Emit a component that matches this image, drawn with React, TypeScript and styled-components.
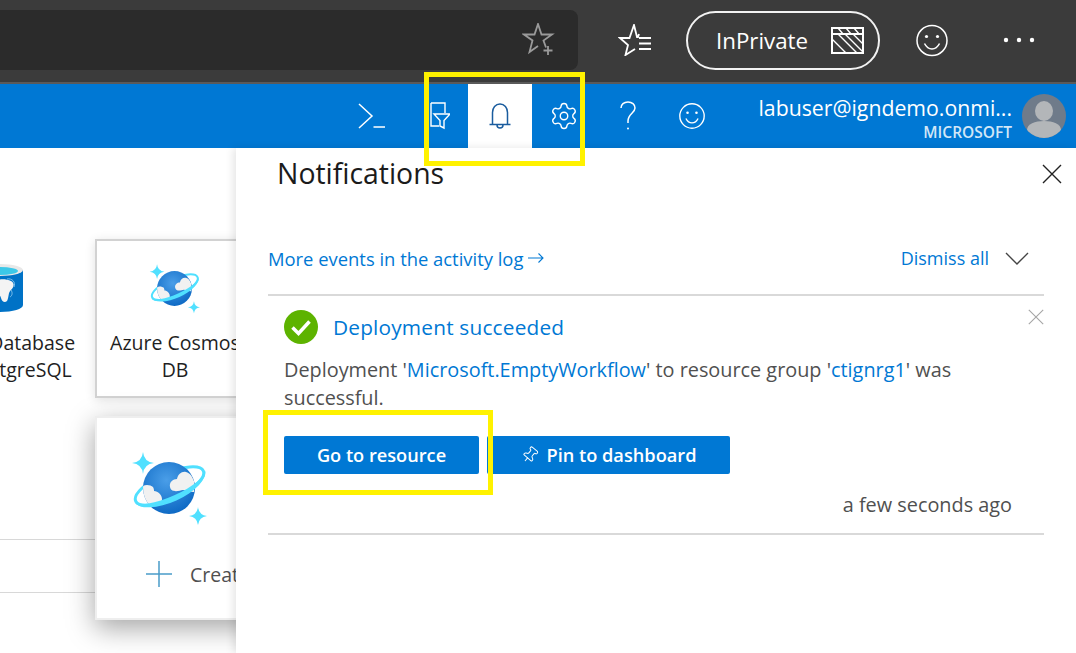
import React, { useId } from 'react';
import styled, { createGlobalStyle } from 'styled-components';
import { Settings, Pin } from 'lucide-react';

const Global = createGlobalStyle`
  html, body { margin: 0; padding: 0; background: #fff; }
  body { font-family: "Open Sans", "Noto Sans", "Liberation Sans", sans-serif; }
`;

const Page = styled.div`
  position: relative;
  width: 1076px;
  height: 653px;
  overflow: hidden;
  background: #fff;
  display: flex;
  flex-direction: column;
`;

const BrowserBar = styled.header`
  height: 80px;
  padding-bottom: 2px;
  flex: none;
  box-sizing: content-box;
  display: flex;
  align-items: center;
  background: #3b3b3b;
  border-bottom: 2px solid #5a5a5a;
`;

const AddressField = styled.div`
  width: 578px;
  height: 60px;
  flex: none;
  box-sizing: border-box;
  padding-right: 22px;
  display: flex;
  align-items: center;
  justify-content: flex-end;
  background: #2b2b2b;
  border-radius: 0 8px 8px 0;
  margin-right: 33px;
`;

const ChromeSlot = styled.div<{ $w: number; $ml?: number }>`
  width: ${p => p.$w}px;
  margin-left: ${p => p.$ml ?? 0}px;
  flex: none;
  display: flex;
  align-items: center;
  justify-content: center;
  color: #fff;
`;

const PrivatePill = styled.div`
  width: 194px;
  height: 59px;
  margin-left: 27px;
  flex: none;
  box-sizing: border-box;
  display: flex;
  align-items: center;
  padding: 0 14px 0 28px;
  justify-content: space-between;
  border: 2px solid #f2f2f2;
  border-radius: 30px;
  color: #fff;
  font-size: 22.3px;
`;

const NavBar = styled.nav`
  height: 64px;
  flex: none;
  display: flex;
  background: #0078d4;
  padding-left: 340px;
`;

const NavButton = styled.div<{ $active?: boolean }>`
  width: 64px;
  flex: none;
  display: flex;
  align-items: center;
  justify-content: center;
  color: ${p => (p.$active ? '#1a5c9e' : '#fff')};
  background: ${p => (p.$active ? '#fff' : 'transparent')};
`;

const Account = styled.div`
  flex: 1;
  min-width: 0;
  display: flex;
  flex-direction: column;
  align-items: flex-end;
  padding-top: 10px;
  color: #fff;
`;

const AccountName = styled.div`
  font-size: 21.25px;
  line-height: 27px;
  white-space: nowrap;
`;

const AccountOrg = styled.div`
  font-size: 15.5px;
  line-height: 20px;
  margin-top: 1px;
  font-weight: 600;
  color: #d3e7f7;
`;

const Avatar = styled.div`
  width: 44px;
  height: 44px;
  margin: 10px 10px 0 10px;
  flex: none;
`;

const Main = styled.main`
  flex: 1;
  display: flex;
  min-height: 0;
`;

const Canvas = styled.section`
  width: 236px;
  flex: none;
  overflow: hidden;
  box-sizing: border-box;
  padding-top: 91px;
`;

const TileRow = styled.div`
  display: flex;
  gap: 16px;
  margin-left: -79px;
`;

const Tile = styled.div<{ $framed?: boolean }>`
  width: 158px;
  height: 159px;
  flex: none;
  box-sizing: border-box;
  padding-top: 20px;
  display: flex;
  flex-direction: column;
  align-items: center;
  border: 2px solid ${p => (p.$framed ? '#d2d2d2' : 'transparent')};
  box-shadow: ${p => (p.$framed ? '0 2px 10px rgba(0,0,0,0.12)' : 'none')};
  background: #fff;
`;

const TileIcon = styled.div`
  height: 54px;
  flex: none;
  display: flex;
  align-items: center;
  justify-content: center;
`;

const TileLabel = styled.div<{ $nudge: number }>`
  margin: 14px 0 0 ${p => p.$nudge}px;
  width: 154px;
  flex: none;
  text-align: center;
  font-size: 19.5px;
  line-height: 27px;
  color: #1f1f1f;
`;

const LowerRow = styled.div`
  display: flex;
  margin-top: 18px;
`;

const ListStub = styled.div`
  width: 95px;
  flex: none;
  padding-top: 123px;
`;

const ListRow = styled.div`
  height: 52px;
  border-top: 1px solid #d8d8d8;
  &:last-child { height: 0; }
`;

const HoverCard = styled.div`
  width: 200px;
  height: 204px;
  flex: none;
  box-sizing: border-box;
  border: 2px solid #eeeeee;
  background: #fff;
  box-shadow: 0 8px 26px rgba(0, 0, 0, 0.36);
  padding: 32px 0 0 34px;
`;

const CreateRow = styled.div`
  display: flex;
  align-items: center;
  gap: 17px;
  margin: 34px 0 0 14px;
  color: #505050;
  font-size: 19.5px;
  white-space: nowrap;
`;

const Panel = styled.aside`
  flex: 1;
  position: relative;
  z-index: 1;
  background: #fff;
  box-shadow: -3px 0 8px rgba(0, 0, 0, 0.1);
  padding: 0 32px;
`;

const PanelHeader = styled.div`
  height: 52px;
  display: flex;
  align-items: center;
  justify-content: space-between;
  margin-right: -32px;
  padding: 0 14px 0 9px;
`;

const PanelTitle = styled.h2`
  margin: -3px 0 0;
  font-size: 28.4px;
  font-weight: 500;
  color: #1b1b1b;
`;

const IconAction = styled.div`
  display: flex;
  flex: none;
`;

const ActivityRow = styled.div`
  display: flex;
  align-items: center;
  justify-content: space-between;
  height: 96px;
  padding: 37px 15px 15px 0;
  box-sizing: border-box;
  border-bottom: 2px solid #d9d9d9;
`;

const Link = styled.a`
  color: #0078d4;
  text-decoration: none;
`;

const ActivityLink = styled(Link)`
  font-size: 18.4px;
  display: flex;
  align-items: center;
  gap: 5px;
`;

const DismissAll = styled.div`
  display: flex;
  align-items: center;
  gap: 16px;
  color: #0078d4;
  font-size: 18px;
`;

const Card = styled.article`
  padding: 13px 0 0 16px;
  height: 239px;
  box-sizing: border-box;
  border-bottom: 2px solid #d9d9d9;
`;

const CardHead = styled.div`
  display: flex;
  align-items: center;
  gap: 15px;
  height: 36px;
`;

const CardTitle = styled.div`
  flex: 1;
  color: #0078d4;
  font-size: 20.8px;
  letter-spacing: 0.2px;
`;

const CardDismiss = styled.div`
  display: flex;
  flex: none;
  margin-top: -20px;
`;

const CardBody = styled.p`
  margin: 11px 0 0;
  font-size: 19.85px;
  line-height: 28px;
  color: #505050;
`;

const Actions = styled.div`
  display: flex;
  gap: 8px;
  margin-top: 24px;
`;

const Button = styled.div<{ $w: number }>`
  width: ${p => p.$w}px;
  height: 38px;
  box-sizing: border-box;
  display: flex;
  align-items: center;
  justify-content: center;
  gap: 8px;
  background: #0078d4;
  border-radius: 2px;
  color: #fff;
  font-size: 18.2px;
  font-weight: 600;
`;

const Timestamp = styled.div`
  margin-top: 17px;
  padding-right: 32px;
  text-align: right;
  font-size: 19.85px;
  line-height: 28px;
  color: #505050;
`;

const Highlight = styled.div<{ $x: number; $y: number; $w: number; $h: number }>`
  position: absolute;
  z-index: 5;
  left: ${p => p.$x}px;
  top: ${p => p.$y}px;
  width: ${p => p.$w}px;
  height: ${p => p.$h}px;
  box-sizing: border-box;
  border: 5px solid #fff200;
  pointer-events: none;
`;

const sparkle = (x: number, y: number, r: number) =>
  `M${x} ${y - r}Q${x + 1} ${y - 1} ${x + r} ${y}Q${x + 1} ${y + 1} ${x} ${y + r}Q${x - 1} ${y + 1} ${x - r} ${y}Q${x - 1} ${y - 1} ${x} ${y - r}Z`;

const CosmosIcon = ({ size }: { size: number }) => {
  const id = useId();
  return (
    <svg width={size} height={size} viewBox="0 0 76 76" style={{ flex: 'none', display: 'block' }}>
      <defs>
        <radialGradient id={`${id}g`} cx="0.45" cy="0.35" r="0.7">
          <stop offset="0" stopColor="#4a9ee8" />
          <stop offset="1" stopColor="#0a66c2" />
        </radialGradient>
        <clipPath id={`${id}c`}><circle cx="38" cy="38" r="26" /></clipPath>
      </defs>
      <ellipse cx="38.500" cy="36" rx="37" ry="13" transform="rotate(-24 38.500 36)" fill="none" stroke="#50e0ff" strokeWidth="3" />
      <circle cx="38" cy="38" r="26" fill={`url(#${id}g)`} />
      <g clipPath={`url(#${id}c)`} fill="#f1f1f1">
        <path d="M39 37c-1-5 3-8 7-8 1-5 5-8 9-7 4 1 6 4 8 9v11c-5 0-8-2-11-2-4 1-12 3-13-3z" />
        <path d="M12 36c3-2 8-1 10 1 1 2 1 3 1 4 4 0 8 4 8 8 0 5-3 6-6 7l-8 1c-4-5-6-13-5-21z" />
      </g>
      <path d="M74 20A39 17 -24 0 1 3 52A39 11 -24 0 0 74 20z" fill="#50e0ff" />
      <path d={sparkle(12, 13, 11)} fill="#50e0ff" />
      <path d={sparkle(67, 66, 9)} fill="#50e0ff" />
    </svg>
  );
};

const PostgresIcon = () => (
  <svg width="46" height="48" viewBox="0 0 46 48" style={{ flex: 'none', display: 'block' }}>
    <path d="M0 6v35c0 4 10 7 23 7s23-3 23-7V6z" fill="#0072c6" />
    <ellipse cx="23" cy="6" rx="23" ry="6" fill="#e8e8e8" />
    <ellipse cx="23" cy="7" rx="18" ry="4" fill="#3cc8e8" />
    <path d="M12 20c3-5 16-6 22-3 4 2 3 6 0 9-3 2-2 8-4 11-2 2-5 1-6-3-1-5-5-3-7-5-4-2-7-5-5-9z" fill="#f4f4f4" />
    <path d="M30 15c5-1 9 3 7 8M34 26c2 3 1 6-1 7" fill="none" stroke="#7cc0ec" strokeWidth="1" />
  </svg>
);

const Smile = ({ size, w = 1.5 }: { size: number; w?: number }) => (
  <svg width={size} height={size} viewBox="0 0 32 32" fill="none" stroke="currentColor" strokeWidth={w}>
    <circle cx="16" cy="16" r="15" />
    <circle cx="10.500" cy="12" r="1.600" fill="currentColor" stroke="none" />
    <circle cx="21.500" cy="12" r="1.600" fill="currentColor" stroke="none" />
    <path d="M8.500 19c2 4 4.500 5.500 7.500 5.500s5.500-1.500 7.500-5.500" />
  </svg>
);

const CloseGlyph = ({ size, color, w }: { size: number; color: string; w: number }) => (
  <svg width={size} height={size} viewBox="0 0 20 20" stroke={color} strokeWidth={w} fill="none">
    <path d="M1 1l18 18M19 1L1 19" />
  </svg>
);

export default function App() {
  return (
    <Page>
      <Global />
      <BrowserBar>
        <AddressField>
          <svg width="34" height="34" viewBox="0 0 34 34" fill="none" stroke="#9a9a9a" strokeWidth="1.800">
            <path d="M24 24.500l-2.500-7L30 11.500H19.500L16 1l-3.500 10.500H2l8.500 6L7.500 29l8.500-6" />
            <path d="M26 23v9M21.500 27.500h9" />
          </svg>
        </AddressField>
        <ChromeSlot $w={48}>
          <svg width="34" height="32" viewBox="0 0 34 32" fill="none" stroke="#fff" strokeWidth="1.800">
            <path d="M21 14h12M21 19.500h12M21 25h12" />
            <path d="M21 10l-1 3h-1l-3-12-4.500 13H2l8 7-2.500 10L17 25" />
          </svg>
        </ChromeSlot>
        <PrivatePill>
          InPrivate
          <svg width="33" height="27" viewBox="0 0 33 27" fill="none" stroke="#fff">
            <rect x="1" y="1" width="31" height="25" strokeWidth="2" />
            <path d="M1 7h31" strokeWidth="2" />
            <path d="M7 7l19 19M14 7l18 18M1 12l14 14M22 7l10 10M7 1l5 6M15 1l5 6M23 1l5 6" strokeWidth="1.400" />
          </svg>
        </PrivatePill>
        <ChromeSlot $w={32} $ml={36}><Smile size={33} /></ChromeSlot>
        <ChromeSlot $w={50} $ml={46}>
          <svg width="32" height="6" viewBox="0 0 32 6" fill="#fff">
            <circle cx="3" cy="3" r="2.200" /><circle cx="16" cy="3" r="2.200" /><circle cx="29" cy="3" r="2.200" />
          </svg>
        </ChromeSlot>
      </BrowserBar>

      <NavBar>
        <NavButton>
          <svg width="28" height="26" viewBox="0 0 28 26" fill="none" stroke="currentColor" strokeWidth="1.500">
            <path d="M1 1l13 12L1 25M15.500 24H27" />
          </svg>
        </NavButton>
        <NavButton>
          <svg width="28" height="28" viewBox="0 0 28 28" fill="none" stroke="currentColor" strokeWidth="1.400">
            <path d="M9 1h14v10M17 24H9V1" />
            <path d="M12 12h16l-6 6.500v7.500l-4-2v-5.500z" />
          </svg>
        </NavButton>
        <NavButton $active>
          <svg width="22" height="26" viewBox="0 0 22 26" fill="none" stroke="currentColor" strokeWidth="1.500">
            <path d="M3.500 21V9.500C3.500 5 6.500 1 11 1s7.500 4 7.500 8.500V21" />
            <path d="M0.500 21.500h21M8 22c0 2 1.500 3 3 3s3-1 3-3" />
          </svg>
        </NavButton>
        <NavButton><Settings size={30} strokeWidth={1.1} /></NavButton>
        <NavButton>
          <svg width="16" height="30" viewBox="0 0 16 30" fill="none" stroke="currentColor" strokeWidth="1.500">
            <path d="M1 7c0-3.500 3-6 7-6s7 2.500 7 6c0 5-7 6-7 13v2" />
            <circle cx="8" cy="27.500" r="1" fill="currentColor" stroke="none" />
          </svg>
        </NavButton>
        <NavButton><Smile size={26} w={1.700} /></NavButton>
        <Account>
          <AccountName>labuser@igndemo.onmi...</AccountName>
          <AccountOrg>MICROSOFT</AccountOrg>
        </Account>
        <Avatar>
          <svg width="44" height="44" viewBox="0 0 44 44">
            <defs>
              <clipPath id="avatarClip"><circle cx="22" cy="22" r="22" /></clipPath>
            </defs>
            <g clipPath="url(#avatarClip)">
              <rect width="44" height="44" fill="#6f7b8a" />
              <ellipse cx="22" cy="17" rx="9" ry="10" fill="#b3b6b9" />
              <path d="M5 44v-8c0-6 8-9 17-9s17 3 17 9v8z" fill="#b3b6b9" />
            </g>
          </svg>
        </Avatar>
      </NavBar>

      <Main>
        <Canvas>
          <TileRow>
            <Tile>
              <TileIcon><PostgresIcon /></TileIcon>
              <TileLabel $nudge={7}>Azure Database for PostgreSQL</TileLabel>
            </Tile>
            <Tile $framed>
              <TileIcon><CosmosIcon size={51} /></TileIcon>
              <TileLabel $nudge={2}>Azure Cosmos DB</TileLabel>
            </Tile>
          </TileRow>
          <LowerRow>
            <ListStub><ListRow /><ListRow /></ListStub>
            <HoverCard>
              <CosmosIcon size={76} />
              <CreateRow>
                <svg width="28" height="28" viewBox="0 0 28 28" stroke="#4a9cc9" strokeWidth="1.500">
                  <path d="M14 1v26M1 14h26" />
                </svg>
                Create
              </CreateRow>
            </HoverCard>
          </LowerRow>
        </Canvas>

        <Panel>
          <PanelHeader>
            <PanelTitle>Notifications</PanelTitle>
            <IconAction><CloseGlyph size={20} color="#222" w={1.400} /></IconAction>
          </PanelHeader>
          <ActivityRow>
            <ActivityLink>
              More events in the activity log
              <svg width="16" height="12" viewBox="0 0 16 12" fill="none" stroke="#0078d4" strokeWidth="1.100">
                <path d="M0 6h15M10.500 1.500L15 6l-4.500 4.500" />
              </svg>
            </ActivityLink>
            <DismissAll>
              Dismiss all
              <svg width="24" height="13" viewBox="0 0 24 13" fill="none" stroke="#444" strokeWidth="1.400">
                <path d="M1 1l11 11L23 1" />
              </svg>
            </DismissAll>
          </ActivityRow>
          <Card>
            <CardHead>
              <svg width="34" height="34" viewBox="0 0 34 34">
                <circle cx="17" cy="17" r="17" fill="#5db300" />
                <path d="M8.500 17.500l6 6 11-12" fill="none" stroke="#fff" strokeWidth="3.500" />
              </svg>
              <CardTitle>Deployment succeeded</CardTitle>
              <CardDismiss><CloseGlyph size={16} color="#a6a6a6" w={1.400} /></CardDismiss>
            </CardHead>
            <CardBody>
              Deployment '<Link>Microsoft.EmptyWorkflow</Link>' to resource group '<Link>ctignrg1</Link>' was successful.
            </CardBody>
            <Actions>
              <Button $w={195}>Go to resource</Button>
              <Button $w={243}>
                <Pin size={18} strokeWidth={1.300} style={{ transform: 'rotate(40deg)' }} />
                Pin to dashboard
              </Button>
            </Actions>
            <Timestamp>a few seconds ago</Timestamp>
          </Card>
        </Panel>
      </Main>

      <Highlight $x={424} $y={72} $w={161} $h={94} />
      <Highlight $x={263} $y={410} $w={230} $h={85} />
    </Page>
  );
}
